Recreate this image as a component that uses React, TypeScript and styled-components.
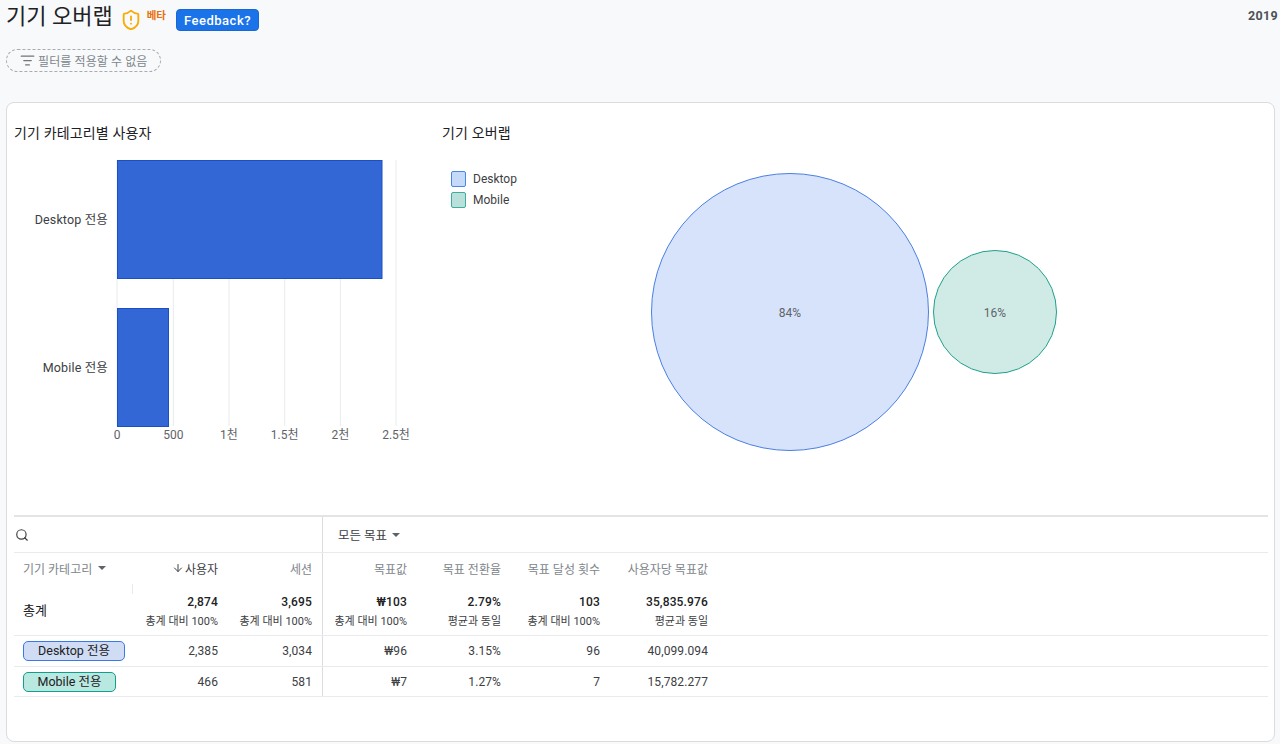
import { ArrowDown, ListFilter, Search, ShieldAlert } from "lucide-react";
import styled, { createGlobalStyle } from "styled-components";

const FONT = `Roboto, "Noto Sans CJK KR", sans-serif`;

const GlobalStyle = createGlobalStyle`
  html, body {
    margin: 0;
    padding: 0;
    background: #f8f9fb;
    font-family: ${FONT};
    color: #202124;
  }
  * { box-sizing: border-box; }
`;

const Page = styled.div`
  width: 1280px;
  height: 744px;
  overflow: hidden;
  padding: 0 5px 0 6px;
`;

const TopBar = styled.header`
  height: 36px;
  display: flex;
  align-items: flex-start;
`;

const Title = styled.h1`
  margin: 2px 0 0;
  font-size: 22px;
  line-height: 30px;
  font-weight: 400;
  color: #202124;
`;

const Shield = styled(ShieldAlert)`
  margin: 9px 0 0 7px;
  flex: none;
  color: #f9ab00;
`;

const Beta = styled.span`
  margin: 8px 0 0 5px;
  font-size: 10.5px;
  line-height: 16px;
  font-weight: 700;
  color: #e8710a;
`;

const FeedbackButton = styled.button`
  margin: 9px 0 0 10px;
  width: 83px;
  height: 22px;
  padding: 0;
  border: 1px solid #1967d2;
  border-radius: 4px;
  background: #1a73e8;
  color: #fff;
  font-family: ${FONT};
  font-size: 13px;
  font-weight: 500;
  letter-spacing: 0.5px;
`;

const Year = styled.span`
  margin: 8px -3px 0 auto;
  font-size: 12.5px;
  line-height: 15px;
  font-weight: 700;
  letter-spacing: 0.3px;
  color: #4d5156;
`;

const FilterChip = styled.div`
  margin-top: 13px;
  width: 155px;
  height: 23px;
  display: flex;
  align-items: center;
  gap: 3px;
  padding-left: 13px;
  border: 1px dashed #a8abb0;
  border-radius: 12px;
  font-size: 12px;
  letter-spacing: 0.1px;
  white-space: nowrap;
  color: #80868b;
  svg { color: #70757a; }
`;

const Card = styled.main`
  margin-top: 30px;
  height: 640px;
  border: 1px solid #dadce0;
  border-radius: 8px;
  background: #fff;
  padding: 0 6px 0 7px;
`;

const Charts = styled.section`
  height: 412px;
  display: flex;
`;

const BarPanel = styled.div`
  width: 428px;
  flex: none;
`;

const ChartTitle = styled.h2`
  margin: 0;
  padding-top: 21px;
  height: 47px;
  font-size: 14px;
  line-height: 18px;
  font-weight: 400;
  letter-spacing: 0.15px;
  color: #202124;
`;

const OverlapPanel = styled.div`
  flex: 1;
  position: relative;
`;

const Legend = styled.ul`
  list-style: none;
  margin: 0;
  padding: 21px 0 0 9px;
  display: flex;
  flex-direction: column;
  gap: 5px;
`;

const LegendItem = styled.li`
  display: flex;
  align-items: center;
  gap: 7px;
  font-size: 12px;
  line-height: 16px;
  color: #3c4043;
`;

const Swatch = styled.i<{ $fill: string; $line: string }>`
  width: 15px;
  height: 16px;
  border-radius: 2px;
  background: ${(p) => p.$fill};
  border: 1px solid ${(p) => p.$line};
`;

const VennSvg = styled.svg`
  position: absolute;
  left: 198px;
  top: 50px;
`;

const ChartText = styled.text<{ $dark?: boolean }>`
  font-family: ${FONT};
  font-size: ${(p) => (p.$dark ? "12.5px" : "12px")};
  letter-spacing: ${(p) => (p.$dark ? "0.15px" : "0")};
  fill: ${(p) => (p.$dark ? "#3c4043" : "#5f6368")};
`;

const Table = styled.section`
  border-top: 2px solid #e3e4e6;
`;

const GRID = "119px 85px 94px 11px 84px 94px 99px 108px 1fr";

const Row = styled.div<{ $h: number; $line?: boolean }>`
  display: grid;
  grid-template-columns: ${GRID};
  height: ${(p) => p.$h}px;
  border-bottom: ${(p) => (p.$line ? "1px solid #e8eaed" : "none")};
  align-items: center;
`;

const Divider = styled.div`
  align-self: stretch;
  border-right: 1px solid #dadce0;
`;

const SearchCell = styled.div`
  grid-column: 1 / 4;
  padding-left: 1px;
  display: flex;
  color: #3c4043;
`;

const GoalSelect = styled.div`
  grid-column: 5 / 7;
  padding-left: 15px;
  display: flex;
  align-items: center;
  gap: 5px;
  font-size: 12.5px;
  color: #3c4043;
`;

const Caret = styled.i`
  width: 0;
  height: 0;
  border-left: 4px solid transparent;
  border-right: 4px solid transparent;
  border-top: 4px solid #5f6368;
`;

const HeadLabel = styled.div`
  padding-left: 9px;
  display: flex;
  align-items: center;
  gap: 6px;
  font-size: 12px;
  white-space: nowrap;
  color: #80868b;
`;

const HeadCell = styled.div<{ $active?: boolean }>`
  display: flex;
  justify-content: flex-end;
  align-items: center;
  gap: 1px;
  font-size: 12px;
  white-space: nowrap;
  color: ${(p) => (p.$active ? "#3c4043" : "#80868b")};
`;

const TotalLabel = styled.div`
  align-self: stretch;
  position: relative;
  padding-left: 9px;
  display: flex;
  align-items: center;
  font-size: 13px;
  color: #202124;
  &::after {
    content: "";
    position: absolute;
    right: 0;
    top: 1px;
    width: 1px;
    height: 10px;
    background: #e8eaed;
  }
`;

const TotalCell = styled.div`
  padding-top: 6px;
  text-align: right;
  white-space: nowrap;
`;

const TotalValue = styled.div`
  font-size: 12px;
  line-height: 16px;
  font-weight: 500;
  letter-spacing: 0.15px;
  color: #202124;
`;

const TotalNote = styled.div`
  margin-top: 4px;
  font-size: 11px;
  line-height: 16px;
  color: #3c4043;
`;

const PillCell = styled.div`
  padding-left: 9px;
`;

const Pill = styled.span<{ $fill: string; $line: string; $w: number }>`
  display: block;
  width: ${(p) => p.$w}px;
  height: 20px;
  line-height: 18px;
  text-align: center;
  font-size: 12.5px;
  white-space: nowrap;
  color: #202124;
  background: ${(p) => p.$fill};
  border: 1px solid ${(p) => p.$line};
  border-radius: 5px;
`;

const ValueCell = styled.div`
  text-align: right;
  font-size: 12px;
  letter-spacing: 0.1px;
  white-space: nowrap;
  color: #3c4043;
`;

const ticks = [
  { x: 103, label: "0" },
  { x: 159.3, label: "500" },
  { x: 215, label: "1천" },
  { x: 270.7, label: "1.5천" },
  { x: 326.4, label: "2천" },
  { x: 382, label: "2.5천" },
];

const BarChart = () => (
  <svg width="428" height="300" viewBox="0 0 428 300" role="img" aria-label="기기 카테고리별 사용자">
    {ticks.map((t) => (
      <g key={t.label}>
        <line x1={t.x} x2={t.x} y1="10" y2="276" stroke="#e8eaed" />
        <ChartText x={t.x} y="289" textAnchor="middle">{t.label}</ChartText>
      </g>
    ))}
    <rect x="103.5" y="10.5" width="264.5" height="118" fill="#3367d6" stroke="#1a50c4" />
    <rect x="103.5" y="158.5" width="51" height="118" fill="#3367d6" stroke="#1a50c4" />
    <ChartText $dark x="94" y="74" textAnchor="end">Desktop 전용</ChartText>
    <ChartText $dark x="94" y="222" textAnchor="end">Mobile 전용</ChartText>
  </svg>
);

const VennChart = () => (
  <VennSvg width="440" height="300" viewBox="0 0 440 300" role="img" aria-label="기기 오버랩">
    <circle cx="150" cy="159" r="138.5" fill="#d6e3fa" stroke="#4a7fe3" />
    <circle cx="355" cy="159" r="61.5" fill="#d0ebe6" stroke="#1fa08d" />
    <ChartText x="150" y="164" textAnchor="middle">84%</ChartText>
    <ChartText x="355" y="164" textAnchor="middle">16%</ChartText>
  </VennSvg>
);

const rows = [
  { name: "Desktop 전용", h: 31, fill: "#cfdcf3", line: "#3b78e7", w: 102, v: ["2,385", "3,034", "₩96", "3.15%", "96", "40,099.094"] },
  { name: "Mobile 전용", h: 30, fill: "#b9e8e0", line: "#129e8c", w: 93, v: ["466", "581", "₩7", "1.27%", "7", "15,782.277"] },
];

const App = () => (
  <Page>
    <GlobalStyle />
    <TopBar>
      <Title>기기 오버랩</Title>
      <Shield size={22} strokeWidth={2} />
      <Beta>베타</Beta>
      <FeedbackButton>Feedback?</FeedbackButton>
      <Year>2019</Year>
    </TopBar>
    <FilterChip>
      <ListFilter size={15} />
      필터를 적용할 수 없음
    </FilterChip>
    <Card>
      <Charts>
        <BarPanel>
          <ChartTitle>기기 카테고리별 사용자</ChartTitle>
          <BarChart />
        </BarPanel>
        <OverlapPanel>
          <ChartTitle>기기 오버랩</ChartTitle>
          <Legend>
            <LegendItem><Swatch $fill="#c5d9f9" $line="#4a86e8" />Desktop</LegendItem>
            <LegendItem><Swatch $fill="#b9e0da" $line="#3cae9c" />Mobile</LegendItem>
          </Legend>
          <VennChart />
        </OverlapPanel>
      </Charts>
      <Table>
        <Row $h={36} $line>
          <SearchCell><Search size={14} /></SearchCell>
          <Divider />
          <GoalSelect>모든 목표 <Caret /></GoalSelect>
        </Row>
        <Row $h={30}>
          <HeadLabel>기기 카테고리 <Caret /></HeadLabel>
          <HeadCell $active><ArrowDown size={12} />사용자</HeadCell>
          <HeadCell>세션</HeadCell>
          <Divider />
          <HeadCell>목표값</HeadCell>
          <HeadCell>목표 전환율</HeadCell>
          <HeadCell>목표 달성 횟수</HeadCell>
          <HeadCell>사용자당 목표값</HeadCell>
        </Row>
        <Row $h={53} $line>
          <TotalLabel>총계</TotalLabel>
          <TotalCell><TotalValue>2,874</TotalValue><TotalNote>총계 대비 100%</TotalNote></TotalCell>
          <TotalCell><TotalValue>3,695</TotalValue><TotalNote>총계 대비 100%</TotalNote></TotalCell>
          <Divider />
          <TotalCell><TotalValue>₩103</TotalValue><TotalNote>총계 대비 100%</TotalNote></TotalCell>
          <TotalCell><TotalValue>2.79%</TotalValue><TotalNote>평균과 동일</TotalNote></TotalCell>
          <TotalCell><TotalValue>103</TotalValue><TotalNote>총계 대비 100%</TotalNote></TotalCell>
          <TotalCell><TotalValue>35,835.976</TotalValue><TotalNote>평균과 동일</TotalNote></TotalCell>
        </Row>
        {rows.map((r) => (
          <Row $h={r.h} $line key={r.name}>
            <PillCell><Pill $fill={r.fill} $line={r.line} $w={r.w}>{r.name}</Pill></PillCell>
            <ValueCell>{r.v[0]}</ValueCell>
            <ValueCell>{r.v[1]}</ValueCell>
            <Divider />
            <ValueCell>{r.v[2]}</ValueCell>
            <ValueCell>{r.v[3]}</ValueCell>
            <ValueCell>{r.v[4]}</ValueCell>
            <ValueCell>{r.v[5]}</ValueCell>
          </Row>
        ))}
      </Table>
    </Card>
  </Page>
);

export default App;
